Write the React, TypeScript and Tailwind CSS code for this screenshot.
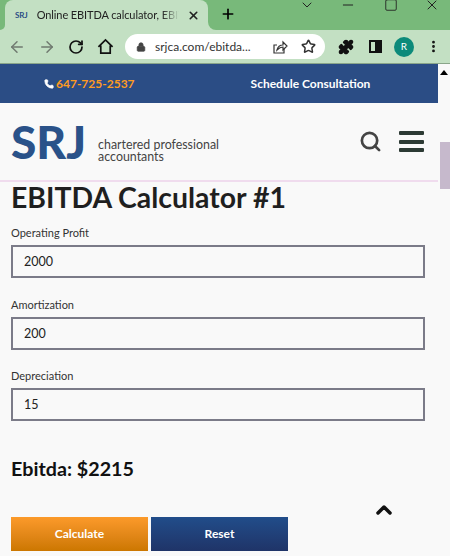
import { ArrowLeft, ArrowRight, RotateCw, Lock, Star, Puzzle, MoreVertical, Search, Plus, X, Minus, Square, ChevronDown, ChevronUp, Phone } from "lucide-react";

const FONT = "font-['Lato','Open_Sans',sans-serif]";

function Field({ label, value, className }: { label: string; value: string; className?: string }) {
  return (
    <div className={`flex flex-col ${className ?? ""}`}>
      <label className="h-[19px] text-[11px] leading-[14px] text-[#333]">{label}</label>
      <div className="flex h-[33px] w-[414px] items-center border-2 border-[#7b7b88] bg-[#f9f9f9] pl-[11px] pt-[2px] text-[12.5px] text-[#222]">
        {value}
      </div>
    </div>
  );
}

export default function App() {
  return (
    <div className={`flex h-[556px] w-[450px] flex-col overflow-hidden bg-[#f9f9f9] ${FONT}`}>
      {/* browser tabs */}
      <div className="flex h-[30px] shrink-0 items-end bg-[#78b97a] pl-[5px]">
        <div className="relative flex h-[30px] w-[203px] items-center rounded-t-lg bg-[#c3e0c3] pl-[10px] pr-2 text-[11px] tracking-[-0.1px] text-[#222]">
          <div className="absolute -left-[5px] bottom-0 h-[5px] w-[5px] bg-[#c3e0c3]">
            <div className="h-[5px] w-[5px] rounded-br-[5px] bg-[#78b97a]" />
          </div>
          <div className="absolute -right-[8px] bottom-0 h-[8px] w-[8px] bg-[#c3e0c3]">
            <div className="h-[8px] w-[8px] rounded-bl-[8px] bg-[#78b97a]" />
          </div>
          <span className="mr-[9px] text-[8px] font-bold text-[#2b4d85]">SRJ</span>
          <span className="min-w-0 flex-1 overflow-hidden whitespace-nowrap [mask-image:linear-gradient(to_right,black_88%,transparent)]">Online EBITDA calculator, EBIT</span>
          <X size={13} strokeWidth={3} className="ml-2 shrink-0" />
        </div>
        <Plus size={16} strokeWidth={2.5} className="mb-[8px] ml-[12px] shrink-0 text-black" />
        <div className="mb-auto ml-auto flex -translate-y-[3px] items-center text-[#222]">
          <ChevronDown size={16} strokeWidth={1.5} />
          <Minus size={16} strokeWidth={1.5} className="ml-[25px]" />
          <Square size={14} strokeWidth={1.5} className="ml-[28px]" />
          <X size={16} strokeWidth={1.5} className="ml-[26px] mr-[10px]" />
        </div>
      </div>
      {/* toolbar */}
      <div className="flex h-[34px] shrink-0 items-center border-b border-[#8aa58a] bg-[#c3e0c3] pl-[8px] text-[#111]">
        <ArrowLeft size={18} className="text-[#707a70]" />
        <ArrowRight size={18} className="ml-[12px] text-[#707a70]" />
        <RotateCw size={16} strokeWidth={2.6} className="ml-[12px]" />
        <svg viewBox="0 0 18 18" className="ml-[13px] h-[17px] w-[17px]" fill="none" stroke="currentColor" strokeWidth="1.8">
          <path d="M1.5 9.5 9 2l7.5 7.5M4 8v8h10V8" />
        </svg>
        <div className="ml-[11px] flex h-[25px] w-[200px] items-center rounded-full bg-white pl-[11px] text-[12px] text-[#333]">
          <Lock size={10} fill="#444" className="mr-[9px] shrink-0 text-[#444]" />
          <span className="w-[117px] shrink-0 whitespace-nowrap">srjca.com/ebitda...</span>
          <svg viewBox="0 0 16 16" className="h-4 w-4 shrink-0" fill="none" stroke="currentColor" strokeWidth="1.2">
            <path d="M5 6H2v8h10v-4" />
            <path d="M5 11c1-4 4-5 6-5V3l4 4-4 4V8c-2 0-4 1-6 3z" />
          </svg>
          <Star size={15} strokeWidth={2.4} className="ml-[13px] shrink-0" />
        </div>
        <Puzzle size={16} fill="#111" className="ml-[13px]" />
        <div className="ml-[15px] flex h-[13px] w-[13px] justify-end border-2 border-[#111]">
          <div className="w-[5px] bg-[#111]" />
        </div>
        <div className="ml-[12px] flex h-[20px] w-[20px] items-center justify-center rounded-full bg-[#0c8a7a] text-[10px] text-white">R</div>
        <MoreVertical size={15} strokeWidth={2.5} className="ml-[12px]" />
      </div>
      <div className="flex min-h-0 flex-1">
        <div className="w-[438px] shrink-0">
          {/* top bar */}
          <div className="flex h-[39px] items-center bg-[#2b4d85] text-[12px] font-bold">
            <div className="ml-[44px] flex items-center text-[#ff9b1f]">
              <Phone size={10} fill="#fff" className="mr-[2px] text-white" />
              647-725-2537
            </div>
            <span className="ml-[116px] text-white">Schedule Consultation</span>
          </div>
          {/* site header */}
          <div className="flex h-[79px] items-center border-b-2 border-[#f0dcee] pl-[11px]">
            <span className="text-[46px] font-black leading-none text-[#2a5289]">SRJ</span>
            <div className="ml-[12px] mt-[18px] whitespace-nowrap text-[12.4px] leading-[12px] text-[#444]">
              chartered professional
              <br />
              accountants
            </div>
            <Search size={23} strokeWidth={2.8} className="ml-auto text-[#444]" />
            <div className="ml-[17px] mr-[14px] flex h-[21px] w-[25px] flex-col justify-between">
              <div className="h-[4px] rounded-[1px] bg-[#2c3a34]" />
              <div className="h-[4px] rounded-[1px] bg-[#2c3a34]" />
              <div className="h-[4px] rounded-[1px] bg-[#2c3a34]" />
            </div>
          </div>
          {/* calculator */}
          <div className="pl-[11px]">
            <h1 className="h-[44px] text-[28.4px] font-bold leading-[31px] text-[#1f1f1f]">EBITDA Calculator #1</h1>
            <Field label="Operating Profit" value="2000" />
            <Field label="Amortization" value="200" className="mt-[20px]" />
            <Field label="Depreciation" value="15" className="mt-[19px]" />
            <div className="mt-[36px] text-[19.7px] font-bold leading-[24px] text-[#111]">Ebitda: $2215</div>
            <div className="mt-[17px] flex items-center">
              <div className="flex h-[34px] w-[137px] items-center justify-center bg-gradient-to-b from-[#fc9a2a] to-[#cc7700] text-[12px] font-bold text-white">Calculate</div>
              <div className="ml-[3px] flex h-[34px] w-[137px] items-center justify-center bg-gradient-to-b from-[#214d8a] to-[#1f3468] text-[12px] font-bold text-white">Reset</div>
              <ChevronUp size={24} strokeWidth={3.5} className="mb-[48px] ml-[84px] text-[#111]" />
            </div>
          </div>
        </div>
        {/* scrollbar */}
        <div className="flex flex-1 flex-col items-center bg-[#f9f9f9]">
          <div className="mt-[6px] h-0 w-0 border-x-[4px] border-b-[5px] border-x-transparent border-b-black" />
          <div className="ml-[2px] mt-[67px] h-[47px] w-[10px] bg-[#c6b9cc]" />
        </div>
      </div>
    </div>
  );
}
